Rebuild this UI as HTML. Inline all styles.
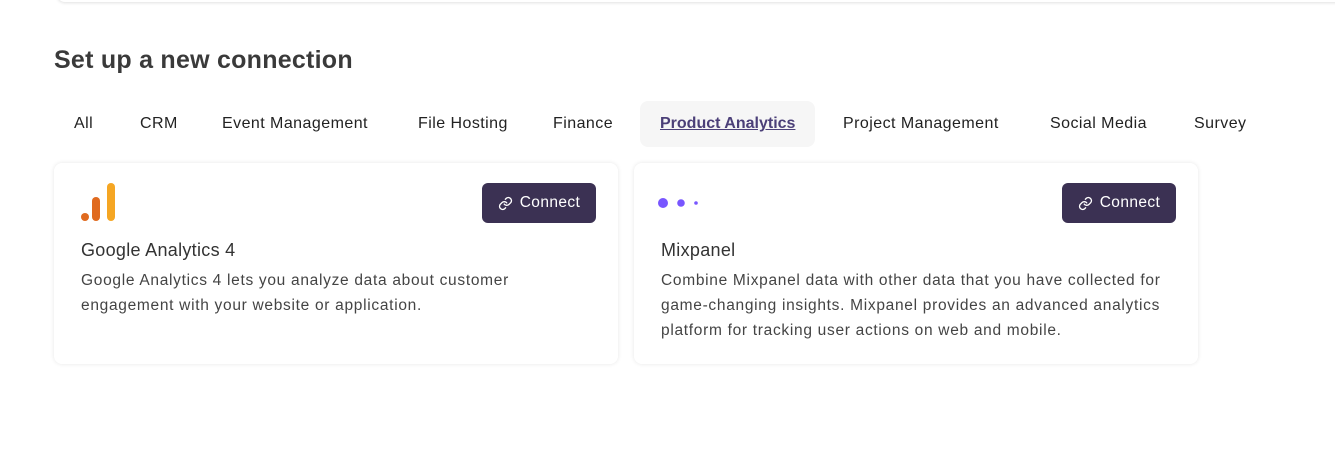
<!DOCTYPE html>
<html><head><style>
*{margin:0;padding:0;box-sizing:border-box}
body{width:1335px;height:462px;background:#fff;font-family:"Liberation Sans",sans-serif;position:relative;overflow:hidden;color:#333}
.top{position:absolute;left:57px;top:-20px;width:1300px;height:22px;border-radius:8px;box-shadow:0 1px 3px rgba(0,0,0,.12);background:#fff}
h1{position:absolute;left:54px;top:46px;font-size:25px;font-weight:bold;color:#3a3a3a;letter-spacing:0.25px}
.tab{position:absolute;top:115px;font-size:16px;color:#222;letter-spacing:0.45px;white-space:nowrap}
.active{position:absolute;left:640px;top:101px;width:175px;height:46px;background:#f6f6f6;border-radius:8px}
.card{position:absolute;top:163px;width:564px;height:201px;border-radius:8px;background:#fff;box-shadow:0 0 4px rgba(0,0,0,.1)}
.btn{position:absolute;top:20px;right:22px;width:114px;height:40px;background:#3b3153;border-radius:6px;color:#fff;font-size:15.5px;letter-spacing:0.4px;display:flex;align-items:center;justify-content:center;gap:7px}
.title{position:absolute;left:27px;top:77px;font-size:18px;letter-spacing:0.3px;color:#333}
.desc{position:absolute;left:27px;top:105px;width:530px;font-size:15.5px;letter-spacing:0.7px;line-height:25px;color:#444;white-space:nowrap}
</style></head><body>
<div class="top"></div>
<h1>Set up a new connection</h1>
<div class="active"></div>
<div class="tab" style="left:74px">All</div>
<div class="tab" style="left:140px">CRM</div>
<div class="tab" style="left:222px">Event Management</div>
<div class="tab" style="left:418px">File Hosting</div>
<div class="tab" style="left:553px">Finance</div>
<div class="tab" style="left:660px;color:#4b3f78;text-decoration:underline;font-weight:bold;letter-spacing:0">Product Analytics</div>
<div class="tab" style="left:843px">Project Management</div>
<div class="tab" style="left:1050px">Social Media</div>
<div class="tab" style="left:1194px">Survey</div>

<div class="card" style="left:54px">
<svg style="position:absolute;left:26px;top:20px" width="36" height="40"><circle cx="5" cy="34" r="4" fill="#e06a1f"/><rect x="12" y="14" width="8" height="24" rx="4" fill="#e06a1f"/><rect x="27" y="0" width="8" height="38" rx="4" fill="#f5a623"/></svg>
<div class="btn"><svg width="15" height="15" viewBox="0 0 24 24" fill="none" stroke="#fff" stroke-width="2.2" stroke-linecap="round"><path d="M10 13a5 5 0 0 0 7.5.5l3-3a5 5 0 0 0-7-7l-1.7 1.7"/><path d="M14 11a5 5 0 0 0-7.5-.5l-3 3a5 5 0 0 0 7 7l1.7-1.7"/></svg>Connect</div>
<div class="title">Google Analytics 4</div>
<div class="desc">Google Analytics 4 lets you analyze data about customer<br>engagement with your website or application.</div>
</div>

<div class="card" style="left:634px">
<svg style="position:absolute;left:23px;top:33px" width="45" height="14"><circle cx="6" cy="7" r="5" fill="#7856ff"/><circle cx="24" cy="7" r="3.8" fill="#7856ff"/><circle cx="39" cy="7" r="1.8" fill="#7856ff"/></svg>
<div class="btn"><svg width="15" height="15" viewBox="0 0 24 24" fill="none" stroke="#fff" stroke-width="2.2" stroke-linecap="round"><path d="M10 13a5 5 0 0 0 7.5.5l3-3a5 5 0 0 0-7-7l-1.7 1.7"/><path d="M14 11a5 5 0 0 0-7.5-.5l-3 3a5 5 0 0 0 7 7l1.7-1.7"/></svg>Connect</div>
<div class="title">Mixpanel</div>
<div class="desc">Combine Mixpanel data with other data that you have collected for<br>game-changing insights. Mixpanel provides an advanced analytics<br>platform for tracking user actions on web and mobile.</div>
</div>
</body></html>
